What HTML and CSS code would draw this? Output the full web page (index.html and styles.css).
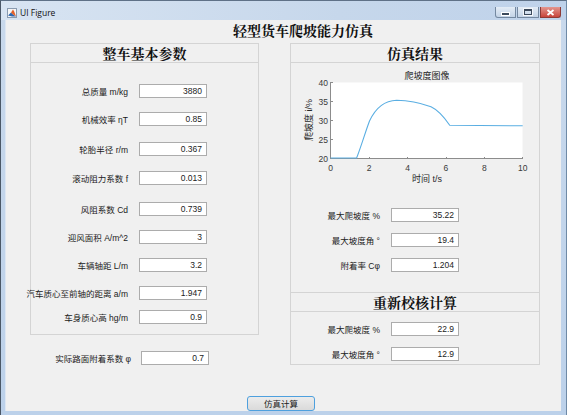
FILE: index.html
```html
<!DOCTYPE html>
<html>
<head>
<meta charset="utf-8">
<title>UI Figure</title>
<link rel="stylesheet" href="styles.css">
</head>
<body>
<div class="window">
  <div class="titlebar">
    <svg class="app-icon" width="10" height="10" viewBox="0 0 10 10">
      <rect x="0.5" y="0.5" width="9" height="9" fill="#f6f6f6" stroke="#8a9bb0" stroke-width="1"/>
      <polygon points="1,7.5 4,4.5 5.5,6 9,8.5 5,8.5" fill="#2d67b0"/>
      <polygon points="4,4.5 6,1.5 7.2,3.5 9,8.5 5.5,6" fill="#e2612b"/>
    </svg>
    <span class="win-title">UI Figure</span>
    <div class="caption-buttons">
      <div class="cap cap-min"><span class="glyph-min"></span></div>
      <div class="cap cap-max"><span class="glyph-max"></span></div>
      <div class="cap cap-close">
        <svg width="9" height="7" viewBox="0 0 9 7"><path d="M1.5 1 L7.5 6 M7.5 1 L1.5 6" stroke="#fff" stroke-width="1.8"/></svg>
      </div>
    </div>
  </div>
  <div class="client">
    <div class="main-title">轻型货车爬坡能力仿真</div>
    <div class="columns">
      <div class="left-col">
        <section class="panel">
          <div class="panel-head">整车基本参数</div>
          <div class="left-body">
            <div class="field"><div class="label">总质量 m/kg</div><div class="input">3880</div></div>
            <div class="field"><div class="label">机械效率 ηT</div><div class="input">0.85</div></div>
            <div class="field sp2"><div class="label">轮胎半径 r/m</div><div class="input">0.367</div></div>
            <div class="field sp1"><div class="label">滚动阻力系数 f</div><div class="input">0.013</div></div>
            <div class="field sp3"><div class="label">风阻系数 Cd</div><div class="input">0.739</div></div>
            <div class="field"><div class="label">迎风面积 A/m^2</div><div class="input">3</div></div>
            <div class="field"><div class="label">车辆轴距 L/m</div><div class="input">3.2</div></div>
            <div class="field"><div class="label">汽车质心至前轴的距离 a/m</div><div class="input">1.947</div></div>
            <div class="field spn4"><div class="label">车身质心高 hg/m</div><div class="input">0.9</div></div>
          </div>
        </section>
        <div class="field phi-field"><div class="label">实际路面附着系数 φ</div><div class="input">0.7</div></div>
      </div>
      <div class="right-col">
        <section class="panel">
          <div class="panel-head">仿真结果</div>
          <svg class="chart" width="248" height="137" viewBox="0 0 248 137">
            <rect x="39.5" y="19.5" width="192" height="76" fill="#ffffff"/>
            <text class="chart-title" x="136" y="15.5" text-anchor="middle">爬坡度图像</text>
            <g stroke="#8c8c8c" stroke-width="1" shape-rendering="crispEdges">
              <line x1="39.5" y1="19" x2="39.5" y2="96"/>
              <line x1="39" y1="95.5" x2="232" y2="95.5"/>
              <line x1="39.5" y1="76.5" x2="41.5" y2="76.5"/>
              <line x1="39.5" y1="57.5" x2="41.5" y2="57.5"/>
              <line x1="39.5" y1="38.5" x2="41.5" y2="38.5"/>
              <line x1="39.5" y1="19.5" x2="41.5" y2="19.5"/>
              <line x1="78.5" y1="93.5" x2="78.5" y2="95.5"/>
              <line x1="116.5" y1="93.5" x2="116.5" y2="95.5"/>
              <line x1="155.5" y1="93.5" x2="155.5" y2="95.5"/>
              <line x1="193.5" y1="93.5" x2="193.5" y2="95.5"/>
              <line x1="231.5" y1="93.5" x2="231.5" y2="95.5"/>
            </g>
            <g class="tick" text-anchor="end">
              <text x="37" y="98.5">20</text>
              <text x="37" y="79.5">25</text>
              <text x="37" y="60.5">30</text>
              <text x="37" y="41.5">35</text>
              <text x="37" y="22.5">40</text>
            </g>
            <g class="tick" text-anchor="middle">
              <text x="39.7" y="107.5">0</text>
              <text x="78.1" y="107.5">2</text>
              <text x="116.5" y="107.5">4</text>
              <text x="154.9" y="107.5">6</text>
              <text x="193.3" y="107.5">8</text>
              <text x="231.7" y="107.5">10</text>
            </g>
            <text class="axis-label" x="136" y="119" text-anchor="middle">时间 t/s</text>
            <text class="axis-label" x="0" y="0" text-anchor="middle" transform="translate(21 57) rotate(-90)">爬坡度 i/%</text>
            <path d="M39.7 95 L65.6 95 C70 84 74 70 78.5 58 C85 44 94 37.5 105.7 37.2 C118 37.2 130 40 140 43.8 C148 47.5 153 54 158.7 62.2 L231.7 62.8" fill="none" stroke="#5aaee2" stroke-width="1.1"/>
          </svg>
          <div class="right-rows">
            <div class="field rfield"><div class="label">最大爬坡度 %</div><div class="input">35.22</div></div>
            <div class="field rfield"><div class="label">最大坡度角 °</div><div class="input">19.4</div></div>
            <div class="field rfield"><div class="label">附着率 Cφ</div><div class="input">1.204</div></div>
          </div>
          <div class="panel-head sub-head">重新校核计算</div>
          <div class="right-rows rows-bottom">
            <div class="field rfield"><div class="label">最大爬坡度 %</div><div class="input">22.9</div></div>
            <div class="field rfield"><div class="label">最大坡度角 °</div><div class="input">12.9</div></div>
          </div>
        </section>
      </div>
    </div>
    <div class="footer"><button class="run-btn" type="button">仿真计算</button></div>
  </div>
</div>
</body>
</html>
```

FILE: styles.css
```css
html, body {
  margin: 0;
  padding: 0;
  width: 567px;
  height: 415px;
  overflow: hidden;
  background: #3fa9d6;
}

.window {
  width: 567px;
  height: 415px;
  box-sizing: border-box;
  display: flex;
  flex-direction: column;
  background: linear-gradient(to bottom, #c9d9ec, #bcd1ea);
  border-top: 1px solid #5f7187;
  border-left: 1px solid #4b5867;
  border-right: 1px solid #6f8aa6;
}

.titlebar {
  height: 19px;
  display: flex;
  align-items: center;
  background: linear-gradient(to right, #d8e4f2, #c6d7eb 60%, #bfd2ea);
  font-family: "Open Sans", "Noto Sans", sans-serif;
}

.app-icon {
  margin-left: 6px;
  margin-top: 4px;
  flex: none;
}

.win-title {
  margin-left: 3px;
  margin-top: 4px;
  font-size: 8.5px;
  color: #111;
}

.caption-buttons {
  margin-left: auto;
  margin-right: 5px;
  margin-top: 6px;
  display: flex;
  gap: 1px;
  align-self: flex-start;
}

.cap {
  height: 11px;
  box-sizing: border-box;
  border: 1px solid #7488a0;
  border-top: none;
  display: flex;
  align-items: center;
  justify-content: center;
}

.cap-min {
  width: 21px;
  border-radius: 0 0 0 3px;
  background: linear-gradient(to bottom, #e4ecf6, #c3d3e7);
}

.cap-max {
  width: 22px;
  background: linear-gradient(to bottom, #e4ecf6, #c3d3e7);
}

.cap-close {
  width: 21px;
  border-radius: 0 0 3px 0;
  border-color: #8d3a36;
  background: linear-gradient(to bottom, #e3968f, #c9453c);
}

.glyph-min {
  width: 7px;
  height: 2px;
  background: #3c4a5c;
  border: 1px solid #fff;
  margin-top: 3px;
}

.glyph-max {
  width: 6px;
  height: 3px;
  border: 1px solid #3c4a5c;
  border-top-width: 2px;
  outline: 1px solid #f4f7fb;
}

.client {
  margin: 0 5px 0 4px;
  height: 391px;
  background: #f0f0f0;
  display: flex;
  flex-direction: column;
  border-left: 1px solid #dde6f2;
  box-sizing: border-box;
  font-family: "Liberation Sans", "Noto Sans CJK SC", sans-serif;
  color: #1a1a1a;
}

.main-title {
  height: 23px;
  line-height: 20px;
  padding-left: 227px;
  font-family: "Noto Serif CJK SC", "Noto Sans CJK SC", serif;
  font-weight: bold;
  font-size: 14px;
  color: #111;
  white-space: nowrap;
}

.columns {
  display: flex;
  align-items: flex-start;
  gap: 31px;
  padding-left: 24px;
}

.left-col {
  width: 229px;
  display: flex;
  flex-direction: column;
}

.right-col {
  width: 250px;
}

.panel {
  border: 1px solid #d4d4d4;
  display: flex;
  flex-direction: column;
}

.panel-head {
  height: 18px;
  line-height: 18px;
  border-bottom: 1px solid #d4d4d4;
  text-align: center;
  font-family: "Noto Serif CJK SC", "Noto Sans CJK SC", serif;
  font-weight: bold;
  font-size: 14px;
  color: #111;
}

.sub-head {
  border-top: 1px solid #d4d4d4;
  margin-top: 20px;
}

.left-body {
  padding: 21px 0 10px 0;
  display: flex;
  flex-direction: column;
  gap: 14px;
}

.field {
  display: flex;
  align-items: center;
  height: 14px;
  gap: 11px;
}

.field .label {
  width: 97px;
  flex: none;
  display: flex;
  justify-content: flex-end;
  white-space: nowrap;
  font-size: 8.5px;
  color: #1a1a1a;
}

.field .input {
  width: 68px;
  height: 14px;
  box-sizing: border-box;
  flex: none;
  border: 1px solid #acacac;
  background: #ffffff;
  text-align: right;
  padding-right: 4px;
  font-size: 8.5px;
  line-height: 12px;
  color: #222;
}

.sp1 { margin-top: 1px; }
.sp2 { margin-top: 2px; }
.sp3 { margin-top: 3px; }
.spn4 { margin-top: -4px; }

.phi-field {
  margin-top: 16px;
  gap: 10px;
}

.phi-field .label {
  width: 101px;
}

.chart {
  display: block;
}

.chart-title {
  font-family: "Liberation Sans", "Noto Sans CJK SC", sans-serif;
  font-size: 9px;
  fill: #222;
}

.tick {
  font-family: "Liberation Sans", sans-serif;
  font-size: 8.5px;
  fill: #3a3a3a;
}

.axis-label {
  font-family: "Liberation Sans", "Noto Sans CJK SC", sans-serif;
  font-size: 9px;
  fill: #2a2a2a;
}

.right-rows {
  display: flex;
  flex-direction: column;
  gap: 11px;
  margin-top: 8px;
}

.rows-bottom {
  margin-top: 10px;
  margin-bottom: 3px;
}

.rfield .label {
  width: 89px;
}

.footer {
  margin-top: 31px;
  padding-left: 241px;
  display: flex;
}

.run-btn {
  width: 68px;
  height: 15px;
  box-sizing: border-box;
  margin: 0;
  padding: 0;
  border: 1px solid #4ea0de;
  border-radius: 3px;
  background: linear-gradient(to bottom, #ececec, #dadada);
  font-family: "Liberation Sans", "Noto Sans CJK SC", sans-serif;
  font-size: 8.5px;
  line-height: 12px;
  color: #1a1a1a;
}
```
